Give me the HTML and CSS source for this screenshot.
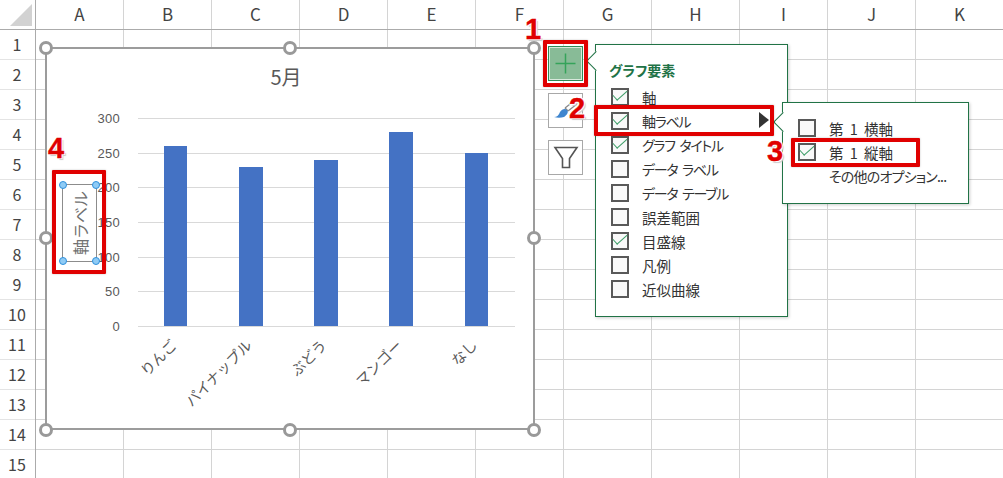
FILE: index.html
```html
<!DOCTYPE html>
<html lang="ja">
<head>
    <meta charset="UTF-8">
    <title>グラフ要素</title>
    <link rel="stylesheet" href="styles.css">
</head>
<body>
    <div class="sheet">
        <!-- 列ヘッダー -->
        <div class="col-head">
            <div class="corner"><span class="corner-mark"></span></div>
            <div class="col">A</div><div class="col">B</div><div class="col">C</div><div class="col">D</div>
            <div class="col">E</div><div class="col">F</div><div class="col">G</div><div class="col">H</div>
            <div class="col">I</div><div class="col">J</div><div class="col">K</div>
        </div>
        <div class="sheet-body">
            <!-- 行ヘッダー -->
            <div class="row-head">
                <div class="row">1</div><div class="row">2</div><div class="row">3</div><div class="row">4</div><div class="row">5</div>
                <div class="row">6</div><div class="row">7</div><div class="row">8</div><div class="row">9</div><div class="row">10</div>
                <div class="row">11</div><div class="row">12</div><div class="row">13</div><div class="row">14</div><div class="row">15</div>
            </div>
            <div class="cells"></div>
        </div>
    </div>

    <!-- グラフ -->
    <div class="chart">
        <div class="chart-title">5月</div>
        <div class="axis">
            <div class="tick"><span class="tick-label">300</span><span class="tick-line"></span></div>
            <div class="tick"><span class="tick-label">250</span><span class="tick-line"></span></div>
            <div class="tick"><span class="tick-label">200</span><span class="tick-line"></span></div>
            <div class="tick"><span class="tick-label">150</span><span class="tick-line"></span></div>
            <div class="tick"><span class="tick-label">100</span><span class="tick-line"></span></div>
            <div class="tick"><span class="tick-label">50</span><span class="tick-line"></span></div>
            <div class="tick"><span class="tick-label">0</span><span class="tick-line"></span></div>
            <div class="bars">
                <div class="bar-cell"><div class="bar" style="height: 180px"></div></div>
                <div class="bar-cell"><div class="bar" style="height: 159px"></div></div>
                <div class="bar-cell"><div class="bar" style="height: 166px"></div></div>
                <div class="bar-cell"><div class="bar" style="height: 194px"></div></div>
                <div class="bar-cell"><div class="bar" style="height: 173px"></div></div>
            </div>
        </div>
        <div class="x-labels">
            <div class="x-cell"><span class="x-label">りんご</span></div>
            <div class="x-cell"><span class="x-label">パイナップル</span></div>
            <div class="x-cell"><span class="x-label">ぶどう</span></div>
            <div class="x-cell"><span class="x-label">マンゴー</span></div>
            <div class="x-cell"><span class="x-label">なし</span></div>
        </div>
        <div class="axis-title">
            <span class="axis-title-text">軸ラベル</span>
            <span class="dot dot-tl"></span><span class="dot dot-tr"></span>
            <span class="dot dot-bl"></span><span class="dot dot-br"></span>
        </div>
    </div>
    <span class="handle h-tl"></span><span class="handle h-tc"></span><span class="handle h-tr"></span>
    <span class="handle h-ml"></span><span class="handle h-mr"></span>
    <span class="handle h-bl"></span><span class="handle h-bc"></span><span class="handle h-br"></span>

    <!-- グラフのボタン -->
    <div class="side-buttons">
        <div class="side-btn side-btn-on">
            <svg width="33" height="33" viewBox="0 0 33 33"><path d="M16.5 6.500v20M6.500 16.500h20" stroke="#35a35a" stroke-width="1.500" fill="none"/></svg>
        </div>
        <div class="side-btn">
            <svg width="33" height="33" viewBox="0 0 33 33">
                <path d="M16 14l9-7M19 17l9-7" stroke="#8a8a8a" stroke-width="1.300" fill="none"/>
                <path d="M16 14l3 3" stroke="#8a8a8a" stroke-width="1.500" fill="none"/>
                <path d="M5 23c3 0 5-2 6-5 2-3 5-4 7-2 2 2 0 5-3 7-3 1-7 1-10 0z" fill="#3f86cf"/>
            </svg>
        </div>
        <div class="side-btn">
            <svg width="33" height="33" viewBox="0 0 33 33"><path d="M6 6.500H28L20.500 17.500V26.500H13.500V17.500Z" stroke="#555" stroke-width="1.600" fill="none"/></svg>
        </div>
    </div>

    <!-- グラフ要素メニュー -->
    <div class="panel panel-main">
        <div class="panel-title">グラフ要素</div>
        <div class="item"><span class="check is-on"></span>軸</div>
        <div class="item item-kana"><span class="check is-on"></span>軸ラベル<span class="arrow"></span></div>
        <div class="item item-kana"><span class="check is-on"></span>グラフ タイトル</div>
        <div class="item item-kana"><span class="check"></span>データ ラベル</div>
        <div class="item item-kana"><span class="check"></span>データ テーブル</div>
        <div class="item"><span class="check"></span>誤差範囲</div>
        <div class="item"><span class="check is-on"></span>目盛線</div>
        <div class="item"><span class="check"></span>凡例</div>
        <div class="item"><span class="check"></span>近似曲線</div>
    </div>
    <div class="panel panel-sub">
        <div class="item item-axis"><span class="check"></span>第 1 横軸</div>
        <div class="item item-axis"><span class="check is-on"></span>第 1 縦軸</div>
        <div class="item item-kana item-more">その他のオプション...</div>
    </div>

    <!-- 赤枠と番号 -->
    <div class="mark mark-1"></div>
    <div class="mark mark-2"></div>
    <div class="mark mark-3"></div>
    <div class="mark mark-4"></div>
    <span class="num num-1">1</span>
    <span class="num num-2">2</span>
    <span class="num num-3">3</span>
    <span class="num num-4">4</span>
</body>
</html>
```

FILE: styles.css
```css
* {
    margin: 0;
    padding: 0;
    box-sizing: border-box;
}

body {
    width: 1003px;
    height: 478px;
    overflow: hidden;
    position: relative;
    background: white;
    font-family: "Noto Sans CJK JP", "Liberation Sans", sans-serif;
    font-feature-settings: "palt";
    color: #333;
}

/* シート */
.col-head {
    display: flex;
    height: 30px;
    border-bottom: 1px solid #ababab;
}

.corner {
    width: 36px;
    flex: none;
    border-right: 1px solid #ababab;
}

.corner-mark {
    display: block;
    width: 22px;
    height: 22px;
    margin: 4px 0 0 10px;
    background: #d2d2d2;
    clip-path: polygon(100% 0, 100% 100%, 0 100%);
}

.col {
    width: 88px;
    flex: none;
    text-align: center;
    line-height: 28px;
    font-size: 17px;
    color: #444;
    border-right: 1px solid #d4d4d4;
}

.sheet-body {
    display: flex;
}

.row-head {
    width: 36px;
    flex: none;
    border-right: 1px solid #ababab;
}

.row {
    height: 30px;
    text-align: center;
    line-height: 29px;
    font-size: 16px;
    color: #444;
    padding-right: 1px;
    border-bottom: 1px solid #e4e4e4;
}

.cells {
    flex: 1;
    height: 450px;
    background-image:
        linear-gradient(to right, transparent 87px, #d4d4d4 87px),
        linear-gradient(to bottom, transparent 29px, #d4d4d4 29px);
    background-size: 88px 30px;
}

/* グラフ */
.chart {
    position: absolute;
    left: 45px;
    top: 47px;
    width: 490px;
    height: 383px;
    background: white;
    border: 2px solid #9c9c9c;
}

.chart-title {
    margin-top: 15px;
    height: 26px;
    line-height: 26px;
    text-align: center;
    font-size: 20px;
    color: #595959;
    padding-right: 8px;
}

.axis {
    position: relative;
    display: flex;
    flex-direction: column;
    justify-content: space-between;
    height: 209px;
    margin-top: 28px;
}

.tick {
    display: flex;
    align-items: center;
    height: 1px;
}

.tick-label {
    width: 73px;
    text-align: right;
    font-size: 13px;
    letter-spacing: 0.3px;
    color: #595959;
    font-family: "Liberation Sans", sans-serif;
}

.tick-line {
    height: 1px;
    width: 377px;
    margin-left: 18px;
    background: #d9d9d9;
}

.bars {
    position: absolute;
    left: 91px;
    width: 376px;
    bottom: 1px;
    display: flex;
}

.bar-cell {
    flex: 1;
    height: 208px;
    display: flex;
    align-items: flex-end;
    justify-content: center;
}

.bar {
    width: 23.500px;
    background: #4472c4;
}

.x-labels {
    display: flex;
    width: 376px;
    margin: 7px 0 0 91px;
}

.x-cell {
    flex: 1;
    min-width: 0;
    display: flex;
    justify-content: flex-end;
    padding-right: 40px;
}

.x-label {
    flex: none;
    white-space: nowrap;
    font-size: 14.500px;
    line-height: 16px;
    font-feature-settings: normal;
    color: #595959;
    transform-origin: right center;
    transform: rotate(-45deg);
}

/* 軸ラベル */
.axis-title {
    position: absolute;
    left: 15px;
    top: 135px;
    width: 35px;
    height: 78px;
    border: 1px solid #8c8c8c;
    background: white;
    display: flex;
    align-items: center;
    justify-content: center;
}

.axis-title-text {
    writing-mode: vertical-rl;
    text-orientation: sideways;
    transform: rotate(180deg);
    font-size: 16px;
    font-feature-settings: normal;
    color: #707070;
}

.dot {
    position: absolute;
    width: 8px;
    height: 8px;
    border-radius: 50%;
    background: #8fcbf5;
    border: 1px solid #2f90dc;
}

.dot-tl { left: -4px; top: -4px; }
.dot-tr { right: -4px; top: -4px; }
.dot-bl { left: -4px; bottom: -4px; }
.dot-br { right: -4px; bottom: -4px; }

/* グラフの枠のハンドル */
.handle {
    position: absolute;
    width: 14px;
    height: 14px;
    border-radius: 50%;
    background: white;
    border: 3px solid #999;
}

.h-tl { left: 39px; top: 41px; }
.h-tc { left: 283px; top: 41px; }
.h-tr { left: 527px; top: 41px; }
.h-ml { left: 39px; top: 231px; }
.h-mr { left: 527px; top: 231px; }
.h-bl { left: 39px; top: 423px; }
.h-bc { left: 283px; top: 423px; }
.h-br { left: 527px; top: 423px; }

/* グラフのボタン */
.side-buttons {
    position: absolute;
    left: 548px;
    top: 46px;
    display: flex;
    flex-direction: column;
    gap: 12px;
}

.side-btn {
    width: 35px;
    height: 35px;
    background: white;
    border: 1px solid #a8a8a8;
}

.side-btn-on {
    background: #88bb97;
    border: 1px solid #2f8a56;
    box-shadow: inset 0 0 0 1px #d8e8dc;
}

/* メニュー */
.panel {
    position: absolute;
    background: white;
    border: 1px solid #217346;
    box-shadow: 1px 1px 3px rgba(0, 0, 0, 0.2);
}

.panel::before {
    content: "";
    position: absolute;
    left: -7px;
    width: 13px;
    height: 13px;
    background: white;
    border-left: 1px solid #217346;
    border-bottom: 1px solid #217346;
    transform: rotate(45deg);
}

.panel-main {
    left: 595px;
    top: 44px;
    width: 193px;
    height: 273px;
    padding: 13px 0 0 15px;
}

.panel-main::before {
    top: 9px;
}

.panel-sub {
    left: 782px;
    top: 102px;
    width: 187px;
    height: 102px;
    padding: 13px 0 0 15px;
}

.panel-sub::before {
    top: 12px;
}

.panel-title {
    height: 27px;
    line-height: 24px;
    font-size: 14px;
    font-weight: bold;
    color: #217346;
    margin-left: -2px;
}

.item {
    position: relative;
    display: flex;
    align-items: center;
    height: 24px;
    font-size: 14.500px;
    color: #333;
    white-space: pre;
}

.item-kana {
    font-size: 14px;
    letter-spacing: -1.300px;
    word-spacing: 3px;
}

.item-axis {
    word-spacing: 3px;
}

.item-more {
    padding-left: 31px;
    letter-spacing: -0.800px;
}

.check {
    position: relative;
    width: 18px;
    height: 18px;
    flex: none;
    margin-right: 13px;
    background: #f9f9f9;
    border: 2px solid #595959;
}

.check.is-on::after {
    content: "";
    position: absolute;
    left: 0;
    top: 0;
    width: 13px;
    height: 6px;
    border-left: 1.200px solid #3e9e68;
    border-bottom: 1.200px solid #3e9e68;
    transform: rotate(-42deg);
}

.arrow {
    position: absolute;
    left: 148px;
    top: 3px;
    width: 0;
    height: 0;
    border-left: 10px solid #333;
    border-top: 8.500px solid transparent;
    border-bottom: 8.500px solid transparent;
}

/* 赤枠 */
.mark {
    position: absolute;
    border: 4px solid #e00000;
    border-radius: 1px;
    box-shadow: 0 0 2px rgba(0, 0, 0, 0.25);
}

.mark-1 { left: 543px; top: 40px; width: 45px; height: 47px; }
.mark-2 { left: 594px; top: 105px; width: 180px; height: 31px; }
.mark-3 { left: 791px; top: 138px; width: 129px; height: 29px; }
.mark-4 { left: 52px; top: 170px; width: 54px; height: 104px; }

.num {
    position: absolute;
    font-family: "Liberation Sans", sans-serif;
    font-weight: bold;
    font-size: 29px;
    line-height: 28px;
    color: #e00000;
    -webkit-text-stroke: 0.400px #e00000;
    text-shadow: -1px -1px 0 #fff, 1px -1px 0 #fff, -1px 1px 0 #fff, 1px 1px 0 #fff, 2px 2px 1px #ccc;
}

.num-1 { left: 525px; top: 15px; }
.num-2 { left: 569px; top: 94px; }
.num-3 { left: 767px; top: 137px; }
.num-4 { left: 48px; top: 134px; }
```
